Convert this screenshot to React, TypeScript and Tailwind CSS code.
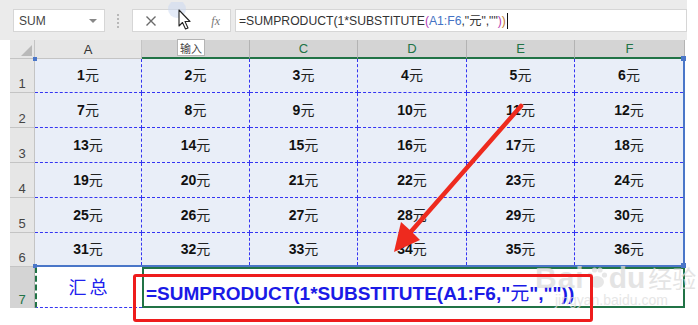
const colNames = ["A", "B", "C", "D", "E", "F"];
const colW = ["w-[107px]", "w-[108px]", "w-[108px]", "w-[109px]", "w-[108px]", "w-[108px]"];
const rowH = ["h-[34px]", "h-[35px]", "h-[35px]", "h-[35px]", "h-[35px]", "h-[32px]"];
const headH = ["h-[34px]", "h-[35px]", "h-[35px]", "h-[35px]", "h-[35px]", "h-[34px]"];

function Cell({ n, w, h, last, bottom }: { n: number; w: string; h: string; last: boolean; bottom: boolean }) {
  return (
    <div
      className={`${w} ${h} flex items-center justify-center border-dashed border-[#3434f2] ${last ? "" : "border-r"} ${bottom ? "" : "border-b"}`}
    >
      <span className="text-[14px] font-bold text-[#111] pb-[1px]">
        {n}
        <span className="font-normal text-[#222] [font-family:'Noto_Sans_CJK_SC',sans-serif] text-[14px]">元</span>
      </span>
    </div>
  );
}

export default function App() {
  return (
    <div className="relative w-[698px] h-[325px] overflow-hidden bg-white [font-family:'Liberation_Sans',Arial,sans-serif]">
      {/* formula bar */}
      <div className="w-[687px] h-[40px] bg-[#ebebeb] pt-[9px] flex items-start">
        <div className="ml-[13px] w-[92px] h-[23px] bg-white border border-[#d6d6d6] flex items-center justify-between px-[5px]">
          <span className="text-[12px] text-[#444]">SUM</span>
          <span className="w-0 h-0 border-l-[4px] border-r-[4px] border-t-[4px] border-l-transparent border-r-transparent border-t-[#888] mr-[2px]" />
        </div>
        <div className="ml-[12px] mt-[5px] flex flex-col gap-[2px]">
          <span className="w-[2px] h-[2px] bg-[#b8b8b8]" />
          <span className="w-[2px] h-[2px] bg-[#b8b8b8]" />
          <span className="w-[2px] h-[2px] bg-[#b8b8b8]" />
          <span className="w-[2px] h-[2px] bg-[#b8b8b8]" />
        </div>
        <div className="ml-[13px] w-[99px] h-[23px] bg-white border border-[#d6d6d6] flex items-center">
          <svg width="12" height="12" viewBox="0 0 12 12" className="ml-[12px]">
            <path d="M1.5 1.5 L10.5 10.5 M10.5 1.5 L1.5 10.5" stroke="#6a6a6a" strokeWidth="1.4" />
          </svg>
          <span className="ml-auto mr-[10px] text-[12px] italic text-[#777] [font-family:'Liberation_Serif',serif]">fx</span>
        </div>
        <div className="ml-[4px] flex-1 h-[23px] bg-white border border-[#d6d6d6] flex items-center pl-[3px]">
          <span className="text-[12.2px] text-[#333] whitespace-pre">
            =SUMPRODUCT(1*SUBSTITUTE<span className="text-[#b43cb4]">(</span>
            <span className="text-[#4472c4]">A1:F6</span>,"
            <span className="[font-family:'Noto_Sans_CJK_SC',sans-serif]">元</span>",""
            <span className="text-[#b43cb4]">)</span>
            <span className="text-[#c07a30]">)</span>
          </span>
          <span className="ml-[1px] w-[1px] h-[16px] bg-[#111]" />
        </div>
      </div>

      {/* column headers */}
      <div className="flex ml-[10px] h-[19px]">
        <div className="w-[25px] bg-[#e6e6e6] border-r border-b border-[#c4c4c4] flex items-end justify-end pr-[2px] pb-[2px]">
          <span className="w-0 h-0 [border-bottom:11px_solid_#b9b9b9] [border-left:11px_solid_transparent]" />
        </div>
        {colNames.map((c, i) => (
          <div
            key={c}
            className={`${colW[i]} ${i === 5 ? "w-[110px]" : ""} flex items-end justify-center text-[13px] leading-[16px] ${
              i === 0
                ? "bg-[#e6e6e6] text-[#333] border-r border-b border-[#c4c4c4]"
                : "bg-[#d4d4d4] text-[#217346] border-r border-r-[#b3b3b3] border-b-2 border-b-[#217346]"
            }`}
          >
            {c === "B" ? "" : c}
          </div>
        ))}
      </div>

      {/* body */}
      <div className="flex ml-[10px]">
        <div className="w-[25px] flex flex-col">
          {headH.map((h, i) => (
            <div
              key={i}
              className={`${h} bg-[#e6e6e6] border-r border-b border-[#c4c4c4] flex items-end justify-center text-[13px] leading-[15px] text-[#444] pb-[1px]`}
            >
              {i + 1}
            </div>
          ))}
          <div className="h-[41px] bg-[#d4d4d4] border-r border-[#b3b3b3] flex items-end justify-center text-[13px] leading-[15px] text-[#217346] pb-[1px]">
            7
          </div>
        </div>
        <div className="flex flex-col">
          <div className="relative bg-[#e9eef8] border-r-2 border-b-2 border-[#4a76c8]">
            {rowH.map((h, r) => (
              <div key={r} className="flex">
                {colNames.map((_, c) => (
                  <Cell key={c} n={r * 6 + c + 1} w={colW[c]} h={h} last={c === 5} bottom={r === 5} />
                ))}
              </div>
            ))}
            <span className="absolute left-[-2px] top-[-2px] w-[4px] h-[4px] bg-[#4a76c8]" />
            <span className="absolute right-[-3px] top-[-3px] w-[5px] h-[5px] bg-[#4a76c8]" />
            <span className="absolute left-[-2px] bottom-[-3px] w-[4px] h-[4px] bg-[#4a76c8]" />
            <span className="absolute right-[-3px] bottom-[-3px] w-[5px] h-[5px] bg-[#4a76c8]" />
          </div>
          <div className="flex h-[41px]">
            <div className="w-[107px] bg-white border-l-2 border-l-[#217346] border-b border-dashed border-b-[#3434f2] flex items-center justify-center">
              <span className="text-[18px] text-[#2020ee] tracking-[3px] [font-family:'Noto_Sans_CJK_SC',sans-serif] font-normal pb-[2px]">汇总</span>
            </div>
            <div className="flex-1 bg-white border-2 border-[#217346] flex items-end pl-[2px] pb-[1px]">
              <span className="text-[19px] font-bold text-[#1a1ae6] whitespace-pre leading-[23px]">
                =SUMPRODUCT(1*SUBSTITUTE(A1:F6,"
                <span className="font-normal [font-family:'Noto_Sans_CJK_SC',sans-serif]">元</span>",""))
              </span>
            </div>
          </div>
        </div>
      </div>

      {/* cursor */}
      <svg className="absolute left-[166px] top-[2px]" width="30" height="30" viewBox="0 0 30 30">
        <circle cx="11" cy="7" r="9" fill="#c9d8f2" opacity="0.5" />
        <path d="M13 8 L13 24 L16.5 20.5 L19.5 27 L22 26 L19 19.5 L24 19.5 Z" fill="#fff" stroke="#222" strokeWidth="1.1" strokeLinejoin="round" />
      </svg>

      {/* tooltip */}
      <div className="absolute left-[177px] top-[39px] h-[17px] px-[2px] bg-white border border-[#b5b5b5] flex items-center">
        <span className="text-[11px] text-[#444] [font-family:'Noto_Sans_CJK_SC',sans-serif] leading-[12px]">输入</span>
      </div>

      {/* red arrow */}
      <svg className="absolute left-0 top-0 pointer-events-none" width="698" height="325" viewBox="0 0 698 325">
        <path d="M521 106 L408 235" stroke="#ee2a1e" strokeWidth="4.5" strokeLinecap="round" />
        <path d="M394 252 L401 222 L411 231 L420 240 Z" fill="#ee2a1e" />
      </svg>

      {/* watermark */}
      <div className="absolute left-[535px] top-[262px] flex flex-col items-start opacity-75 pointer-events-none">
        <div className="flex items-center">
          <span className="text-[30px] font-bold text-[#dcdcdc] leading-[32px] tracking-[1px]">Bai</span>
          <svg width="22" height="24" viewBox="0 0 22 24" className="mx-[1px]">
            <ellipse cx="11" cy="16" rx="7" ry="6" fill="#e0e0e0" />
            <circle cx="4" cy="9" r="2.6" fill="#e0e0e0" />
            <circle cx="8.5" cy="4" r="2.6" fill="#e0e0e0" />
            <circle cx="14" cy="4" r="2.6" fill="#e0e0e0" />
            <circle cx="18.5" cy="9" r="2.6" fill="#e0e0e0" />
          </svg>
          <span className="text-[30px] font-bold text-[#dcdcdc] leading-[32px]">du</span>
          <span className="ml-[3px] text-[24px] text-[#dcdcdc] leading-[32px] [font-family:'Noto_Sans_CJK_SC',sans-serif]">经验</span>
        </div>
        <span className="ml-[20px] -mt-[2px] text-[14px] text-[#dedede] leading-[16px]">jingyan.baidu.com</span>
      </div>

      {/* red highlight box */}
      <div className="absolute left-[133px] top-[274px] w-[460px] h-[48px] border-[3px] border-[#ee1c1c] rounded-[3px]" />
    </div>
  );
}
